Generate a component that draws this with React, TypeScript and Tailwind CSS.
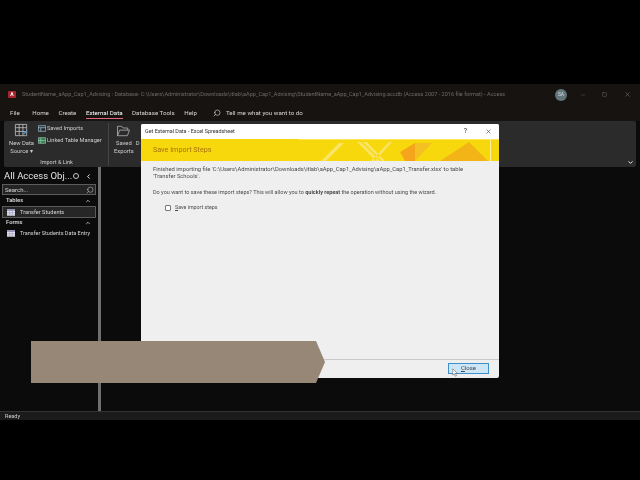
import { ChevronUp, ChevronDown, ChevronLeft, Search, X, Minus, Square } from 'lucide-react'

const FONT = "font-['Roboto','Liberation_Sans',sans-serif]"

function TableIcon() {
  return (
    <svg viewBox="0 0 10 8" className="w-[8px] h-[7px] shrink-0">
      <rect width="10" height="8" fill="#e8e8f0" />
      <rect width="10" height="2" fill="#8f8fb8" />
      <path d="M3.3 0v8M6.6 0v8M0 4h10M0 6h10" stroke="#8f8fb8" strokeWidth="0.6" />
    </svg>
  )
}

function Tab({ label, active, className = '' }: { label: string; active?: boolean; className?: string }) {
  return (
    <span className={`relative text-[6.2px] leading-none whitespace-nowrap ${active ? 'text-white' : 'text-[#d8d8d8]'} ${className}`}>
      {label}
      {active && <span className="absolute left-0 right-0 -bottom-[3px] h-px bg-[#e4667a]" />}
    </span>
  )
}

function Ribbon() {
  return (
    <div className="mx-[4px] h-[46px] shrink-0 rounded-[2px] bg-[#2b2b2b] flex text-[#cfcfcf] relative">
      <div className="w-[105px] shrink-0 border-r border-[#454545] mt-[2px] mb-px flex flex-col">
        <div className="flex flex-1 min-h-0 pl-[6px]">
          <div className="w-[23px] shrink-0 flex flex-col items-center text-center leading-[8px] text-[5.8px] whitespace-nowrap">
            <svg viewBox="0 0 16 16" className="w-[15px] h-[15px] mb-px shrink-0" fill="none" stroke="#c9c9c9" strokeWidth="0.8">
              <path d="M1.5 1.5h12v12h-12zM1.5 5h12M1.5 9h12M5.5 1.5v12M9.5 1.5v12" />
              <path d="M10 12l4-4" stroke="#4d9fd6" strokeWidth="1.4" />
            </svg>
            <span>New Data</span>
            <span>Source ▾</span>
          </div>
          <div className="flex flex-col gap-[5px] pt-[2px] pl-[5px] leading-none text-[5.6px] whitespace-nowrap">
            <div className="flex items-center gap-[1px]">
              <svg viewBox="0 0 10 8" className="w-[8px] h-[7px] shrink-0" fill="none" stroke="#9fc4dc" strokeWidth="0.9">
                <path d="M.5.5h9v7h-9zM.5 3h9M3.5 3v4.5" />
              </svg>
              <span>Saved Imports</span>
            </div>
            <div className="flex items-center gap-[1px]">
              <svg viewBox="0 0 10 8" className="w-[8px] h-[7px] shrink-0" fill="#2f7d4f" stroke="#a8d0b8" strokeWidth="0.8">
                <path d="M.5.5h9v7h-9zM3.5.5v7M.5 4h9" />
              </svg>
              <span>Linked Table Manager</span>
            </div>
          </div>
        </div>
        <div className="text-center text-[5.5px] leading-[8px] pl-[1px]">Import &amp; Link</div>
      </div>
      <div className="pl-[5px] flex flex-col items-center text-center leading-[8px] text-[5.8px] pt-[4px]">
        <svg viewBox="0 0 16 14" className="w-[15px] h-[12px] mb-[2px] shrink-0" fill="none" stroke="#c9c9c9" strokeWidth="0.8">
          <path d="M1 12.5V1.5h5l1.5 2H13V6M1 12.5l2.5-6.5H15l-2.5 6.5z" />
        </svg>
        <span>Saved</span>
        <span>Exports</span>
      </div>
      <div className="pl-[2px] pt-[18px] text-[5.8px]">D</div>
      <ChevronDown className="absolute right-[2px] bottom-[1px] w-[7px] h-[7px] text-white" strokeWidth={3} />
    </div>
  )
}

function Sidebar() {
  return (
    <aside className="w-[101px] shrink-0 border-r-[3px] border-[#6f6f6f] pt-px text-[#d6d6d6]">
      <div className="flex items-center pl-[4px] pr-[6px] h-[16px]">
        <span className="text-[9.5px] text-[#e4e4e4] whitespace-nowrap flex-1 leading-none">All Access Obj...</span>
        <span className="w-[6px] h-[6px] shrink-0 rounded-full border border-[#c8c8c8] mr-[6px]" />
        <ChevronLeft className="w-[7px] h-[7px] shrink-0 text-white" strokeWidth={3} />
      </div>
      <div className="mx-[2px] h-[11px] border border-[#5c5c5c] bg-[#242424] flex items-center justify-between pl-[2px] pr-[1px] text-[6px]">
        <span>Search...</span>
        <Search className="w-[8px] h-[8px] -scale-x-100" strokeWidth={1.5} />
      </div>
      <div className="flex items-center justify-between pl-[6px] pr-[7px] h-[11px] text-[5.8px] font-semibold">
        <span>Tables</span>
        <ChevronUp className="w-[6px] h-[6px]" strokeWidth={3} />
      </div>
      <div className="mx-[2px] h-[12px] border border-[#5a5a5a] bg-[#262626] flex items-center pl-[4px] gap-[5px] text-[5.6px] whitespace-nowrap">
        <TableIcon />
        <span>Transfer Students</span>
      </div>
      <div className="flex items-center justify-between pl-[6px] pr-[7px] h-[9px] text-[5.8px] font-semibold">
        <span>Forms</span>
        <ChevronUp className="w-[6px] h-[6px]" strokeWidth={3} />
      </div>
      <div className="mx-[2px] h-[12px] flex items-center pl-[5px] gap-[5px] text-[5.5px] whitespace-nowrap">
        <TableIcon />
        <span>Transfer Students Data Entry</span>
      </div>
    </aside>
  )
}

function Dialog() {
  return (
    <div className="absolute left-[141px] top-[40px] w-[358px] h-[254px] bg-[#efefef] rounded-[2px] flex flex-col text-[#4a4a4a]">
      <div className="h-[15px] bg-white flex items-center pl-[4px] pr-[7px] text-[5.4px] text-[#333] shrink-0 rounded-t-[2px]">
        <span className="flex-1">Get External Data - Excel Spreadsheet</span>
        <span className="mr-[18px] text-[7px]">?</span>
        <X className="w-[7px] h-[7px]" strokeWidth={2} />
      </div>
      <div className="h-[22px] shrink-0 bg-[#f7d80c] flex items-center pl-[12px] relative overflow-hidden">
        <span className="text-[7.2px] text-[#a8720c]">Save Import Steps</span>
        <svg viewBox="0 0 200 22" className="absolute right-0 top-0 h-[22px] w-[200px]">
          <path d="M0 0h200v1H0z" fill="#fbe65a" />
          <path d="M22 22 40 4h5L27 22zM58 3l19 19h4L62 3zM64 3l19 19h3L68 3zM72 22l18-19h3L76 22z" fill="#f9e467" />
          <path d="M101 13 116 4v18h-10z" fill="#f4a51c" />
          <path d="M116 4h17l-17 18z" fill="#f5c022" />
          <path d="M141 22 170 3l19 19z" fill="#f3b418" />
          <path d="M191 0h1v22h-1z" fill="#fdf1a0" />
        </svg>
      </div>
      <div className="flex-1 pl-[12px] pr-[30px] pt-[5px] text-[5.8px] leading-[7px]">
        <p>Finished importing file 'C:\Users\Administrator\Downloads\itlab\aApp_Cap1_Advising\aApp_Cap1_Transfer.xlsx' to table 'Transfer Schools'.</p>
        <p className="mt-[9px] whitespace-nowrap text-[5.5px]">
          Do you want to save these import steps? This will allow you to <b>quickly repeat</b> the operation without using the wizard.
        </p>
        <label className="flex items-center gap-[4px] ml-[12px] mt-[8px] text-[5.3px]">
          <span className="w-[6px] h-[6px] border border-[#777] bg-white rounded-[1px]" />
          <span><u>S</u>ave import steps</span>
        </label>
      </div>
      <div className="h-[19px] shrink-0 border-t border-[#c9c9c9] flex items-center justify-end pr-[10px] pb-[2px]">
        <button className="relative w-[41px] h-[11px] bg-[#cde6f7] border border-[#3f8fc8] text-[6px] leading-none text-[#444]">
          <u>C</u>lose
          <svg viewBox="0 0 8 12" className="absolute left-[3px] top-[4px] w-[6px] h-[9px]">
            <path d="M1 1v8.5l2-2 1.5 3.5 1.5-.7L4.5 7H7z" fill="#fff" stroke="#555" strokeWidth="0.7" />
          </svg>
        </button>
      </div>
    </div>
  )
}

export default function App() {
  return (
    <div className={`w-[640px] h-[480px] bg-black overflow-hidden flex flex-col blur-[0.3px] ${FONT}`}>
      <div className="h-[84px] shrink-0" />
      <div className="h-[336px] shrink-0 bg-[#0b0b0b] flex flex-col relative">
        <div className="h-[21px] shrink-0 bg-[#171311] flex items-center pl-[8px] text-[#6e6a68] text-[5.55px] whitespace-nowrap">
          <span className="w-[8px] h-[7px] shrink-0 rounded-[1px] bg-[#a4262c] mr-[6px] flex items-center justify-center text-[5px] text-white font-bold">A</span>
          <span className="w-[525px] shrink-0">StudentName_aApp_Cap1_Advising : Database- C:\Users\Administrator\Downloads\itlab\aApp_Cap1_Advising\StudentName_aApp_Cap1_Advising.accdb (Access 2007 - 2016 file format) - Access</span>
          <span className="ml-[8px] w-[12px] h-[12px] shrink-0 rounded-full bg-[#62757a] text-[#d8dedf] text-[5px] flex items-center justify-center">SA</span>
          <Minus className="ml-[13px] w-[6px] h-[6px] shrink-0 text-[#5e5a58]" />
          <Square className="ml-[16px] w-[5px] h-[5px] shrink-0 text-[#7a7674]" />
          <X className="ml-[17px] w-[7px] h-[7px] shrink-0 text-[#7a7674]" />
        </div>
        <div className="h-[16px] shrink-0 bg-[#171311] flex items-center pl-[10px] gap-[9.5px]">
          <Tab label="File" />
          <Tab label="Home" className="ml-[3px]" />
          <Tab label="Create" />
          <Tab label="External Data" active />
          <Tab label="Database Tools" />
          <Tab label="Help" />
          <Search className="ml-[7px] w-[8px] h-[8px] text-[#d0d0d0] -scale-x-100" strokeWidth={2} />
          <Tab label="Tell me what you want to do" className="-ml-[5px]" />
        </div>
        <Ribbon />
        <div className="flex-1 flex min-h-0">
          <Sidebar />
          <div className="flex-1" />
        </div>
        <div className="h-[9px] shrink-0 bg-[#1b1b1b] border-t border-[#333] flex items-center pl-[5px] text-[5.5px] text-[#d0d0d0]">Ready</div>
        <Dialog />
        <div className="absolute left-[31px] top-[257px] w-[294px] h-[42px] bg-[#968776] [clip-path:polygon(0_0,285px_0,100%_50%,285px_100%,0_100%)]" />
      </div>
      <div className="flex-1" />
    </div>
  )
}
